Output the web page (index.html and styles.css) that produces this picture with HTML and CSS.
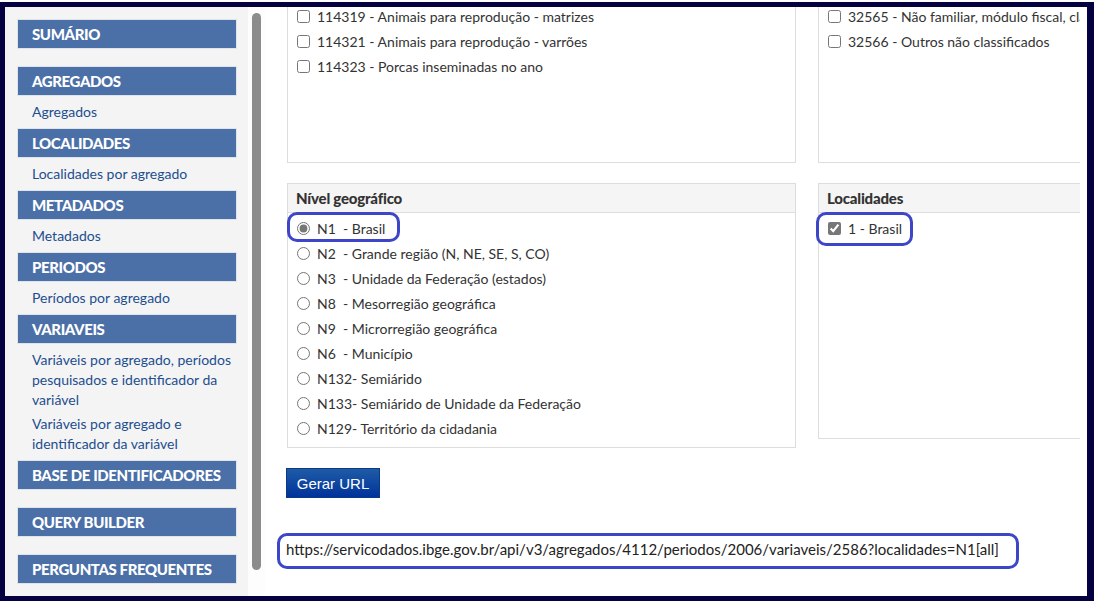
FILE: index.html
```html
<!DOCTYPE html>
<html lang="pt-BR">
<head>
<meta charset="utf-8">
<title>API de agregados - Query Builder</title>
<link rel="stylesheet" href="styles.css">
</head>
<body>
<div class="frame">
  <aside class="sidebar">
    <nav class="menu">
      <div class="sec solo"><div class="hd">SUMÁRIO</div></div>
      <div class="sec"><div class="hd">AGREGADOS</div>
        <ul class="links"><li><a href="#">Agregados</a></li></ul></div>
      <div class="sec"><div class="hd">LOCALIDADES</div>
        <ul class="links"><li><a href="#">Localidades por agregado</a></li></ul></div>
      <div class="sec"><div class="hd">METADADOS</div>
        <ul class="links"><li><a href="#">Metadados</a></li></ul></div>
      <div class="sec"><div class="hd">PERIODOS</div>
        <ul class="links"><li><a href="#">Períodos por agregado</a></li></ul></div>
      <div class="sec"><div class="hd">VARIAVEIS</div>
        <ul class="links">
          <li><a href="#">Variáveis por agregado, períodos<br>pesquisados e identificador da<br>variável</a></li>
          <li><a href="#">Variáveis por agregado e<br>identificador da variável</a></li>
        </ul></div>
      <div class="sec solo"><div class="hd">BASE DE IDENTIFICADORES</div></div>
      <div class="sec solo"><div class="hd">QUERY BUILDER</div></div>
      <div class="sec solo"><div class="hd">PERGUNTAS FREQUENTES</div></div>
    </nav>
  </aside>
  <div class="gutter"><div class="thumb"></div></div>
  <main class="main">
    <div class="cols top">
      <div class="panel cut">
        <div class="list shifted">
          <label class="item"><input type="checkbox"><span>114319 - Animais para reprodução - matrizes</span></label>
          <label class="item"><input type="checkbox"><span>114321 - Animais para reprodução - varrões</span></label>
          <label class="item"><input type="checkbox"><span>114323 - Porcas inseminadas no ano</span></label>
        </div>
      </div>
      <div class="panel cut">
        <div class="list shifted">
          <label class="item"><input type="checkbox"><span>32565 - Não familiar, módulo fiscal, classificação</span></label>
          <label class="item"><input type="checkbox"><span>32566 - Outros não classificados</span></label>
        </div>
      </div>
    </div>
    <div class="cols bottom">
      <div class="panel">
        <div class="phd">Nível geográfico</div>
        <div class="list geo">
          <label class="item mark"><input class="on" type="radio" name="nivel" checked><span class="pre">N1  - Brasil</span><i class="ring ring-n1"></i></label>
          <label class="item"><input type="radio" name="nivel"><span class="pre">N2  - Grande região (N, NE, SE, S, CO)</span></label>
          <label class="item"><input type="radio" name="nivel"><span class="pre">N3  - Unidade da Federação (estados)</span></label>
          <label class="item"><input type="radio" name="nivel"><span class="pre">N8  - Mesorregião geográfica</span></label>
          <label class="item"><input type="radio" name="nivel"><span class="pre">N9  - Microrregião geográfica</span></label>
          <label class="item"><input type="radio" name="nivel"><span class="pre">N6  - Município</span></label>
          <label class="item"><input type="radio" name="nivel"><span class="pre">N132- Semiárido</span></label>
          <label class="item"><input type="radio" name="nivel"><span class="pre">N133- Semiárido de Unidade da Federação</span></label>
          <label class="item"><input type="radio" name="nivel"><span class="pre">N129- Território da cidadania</span></label>
        </div>
      </div>
      <div class="panel loc">
        <div class="phd">Localidades</div>
        <div class="list geo">
          <label class="item mark"><input class="on" type="checkbox" checked><span>1 - Brasil</span><i class="ring ring-loc"></i></label>
        </div>
      </div>
    </div>
    <button class="btn" type="button">Gerar URL</button>
    <p class="url">https://servicodados.ibge.gov.br/api/v3/agregados/4112/periodos/2006/variaveis/2586?localidades=N1[all]<i class="ring ring-url"></i></p>
  </main>
</div>
</body>
</html>
```
FILE: styles.css
```css
* { box-sizing: border-box; }

html, body {
  margin: 0;
  padding: 0;
  background: #ffffff;
  font-family: "Lato", "Noto Sans", sans-serif;
}

.frame {
  margin-top: 2px;
  width: 1094px;
  height: 599px;
  display: flex;
  border-style: solid;
  border-color: #05003f;
  border-width: 5px 7px 5px 5px;
  padding-right: 7px;
  background: #ffffff;
  overflow: hidden;
}

/* ---------- sidebar ---------- */
.sidebar {
  width: 243px;
  flex: none;
  background: #f4f4f4;
  padding: 12px 11px 0 12px;
}

.sec.solo { margin-bottom: 17px; }

.hd {
  height: 30px;
  line-height: 28px;
  padding-left: 14px;
  background: #4b6fa7;
  border: 1px solid #dfe3ea;
  color: #ffffff;
  font-weight: 900;
  font-size: 15px;
  letter-spacing: -0.4px;
}

.links {
  list-style: none;
  margin: 0;
  padding: 6px 0 6px 15px;
}

.links li {
  font-size: 14px;
  line-height: 20px;
}

.links li + li { margin-top: 4px; }

.links a {
  color: #1d4e8f;
  text-decoration: none;
}

.gutter {
  width: 17px;
  flex: none;
  background: #fdfdfd;
  padding: 6px 4px 0 4px;
}

.thumb {
  width: 9px;
  height: 557px;
  border-radius: 5px;
  background: #8c8c8c;
}

/* ---------- main ---------- */
.main {
  width: 815px;
  flex: none;
  padding-left: 22px;
  overflow: hidden;
}

.cols {
  display: flex;
  align-items: flex-start;
  gap: 22px;
  width: 1040px;
}

.cols.bottom { margin-top: 20px; }

.panel {
  width: 509px;
  flex: none;
  border: 1px solid #dddddd;
  background: #ffffff;
}

.panel.cut {
  height: 156px;
  border-top: none;
  overflow: hidden;
}

.panel.loc { height: 256px; }

.phd {
  height: 29px;
  line-height: 28px;
  padding-left: 8px;
  background: #f5f5f5;
  border-bottom: 1px solid #dddddd;
  color: #333333;
  font-weight: 900;
  font-size: 15px;
  letter-spacing: -0.2px;
}

.list.shifted { margin-top: -3px; }

.list.geo { padding: 3px 0 6px; }

.item {
  position: relative;
  display: flex;
  align-items: center;
  gap: 7px;
  height: 25px;
  padding-left: 9px;
  color: #333333;
  font-size: 14px;
  white-space: nowrap;
}

.item input {
  margin: 0;
  width: 13px;
  height: 13px;
  flex: none;
}

.item input.on { accent-color: #777777; }

.pre { white-space: pre; }

/* annotation rings drawn over the content */
.ring {
  position: absolute;
  border: 3px solid #3d46c9;
  border-radius: 10px;
  pointer-events: none;
}

.ring-n1 { left: -1px; top: -4px; width: 113px; height: 30px; }
.ring-loc { left: -3px; top: -4px; width: 97px; height: 34px; }

.btn {
  display: block;
  margin-top: 20px;
  margin-left: -1px;
  width: 94px;
  height: 30px;
  padding: 0;
  border: 1px solid #0a3a86;
  background: linear-gradient(#1f5ba6, #00339b);
  color: #ffffff;
  font-family: "Liberation Sans", Arial, sans-serif;
  font-size: 15px;
}

.url {
  position: relative;
  margin: 40px 0 0 -1px;
  line-height: 22px;
  font-size: 15px;
  color: #222222;
  white-space: nowrap;
}

.ring-url { left: -9px; top: -5px; width: 742px; height: 36px; }
```
